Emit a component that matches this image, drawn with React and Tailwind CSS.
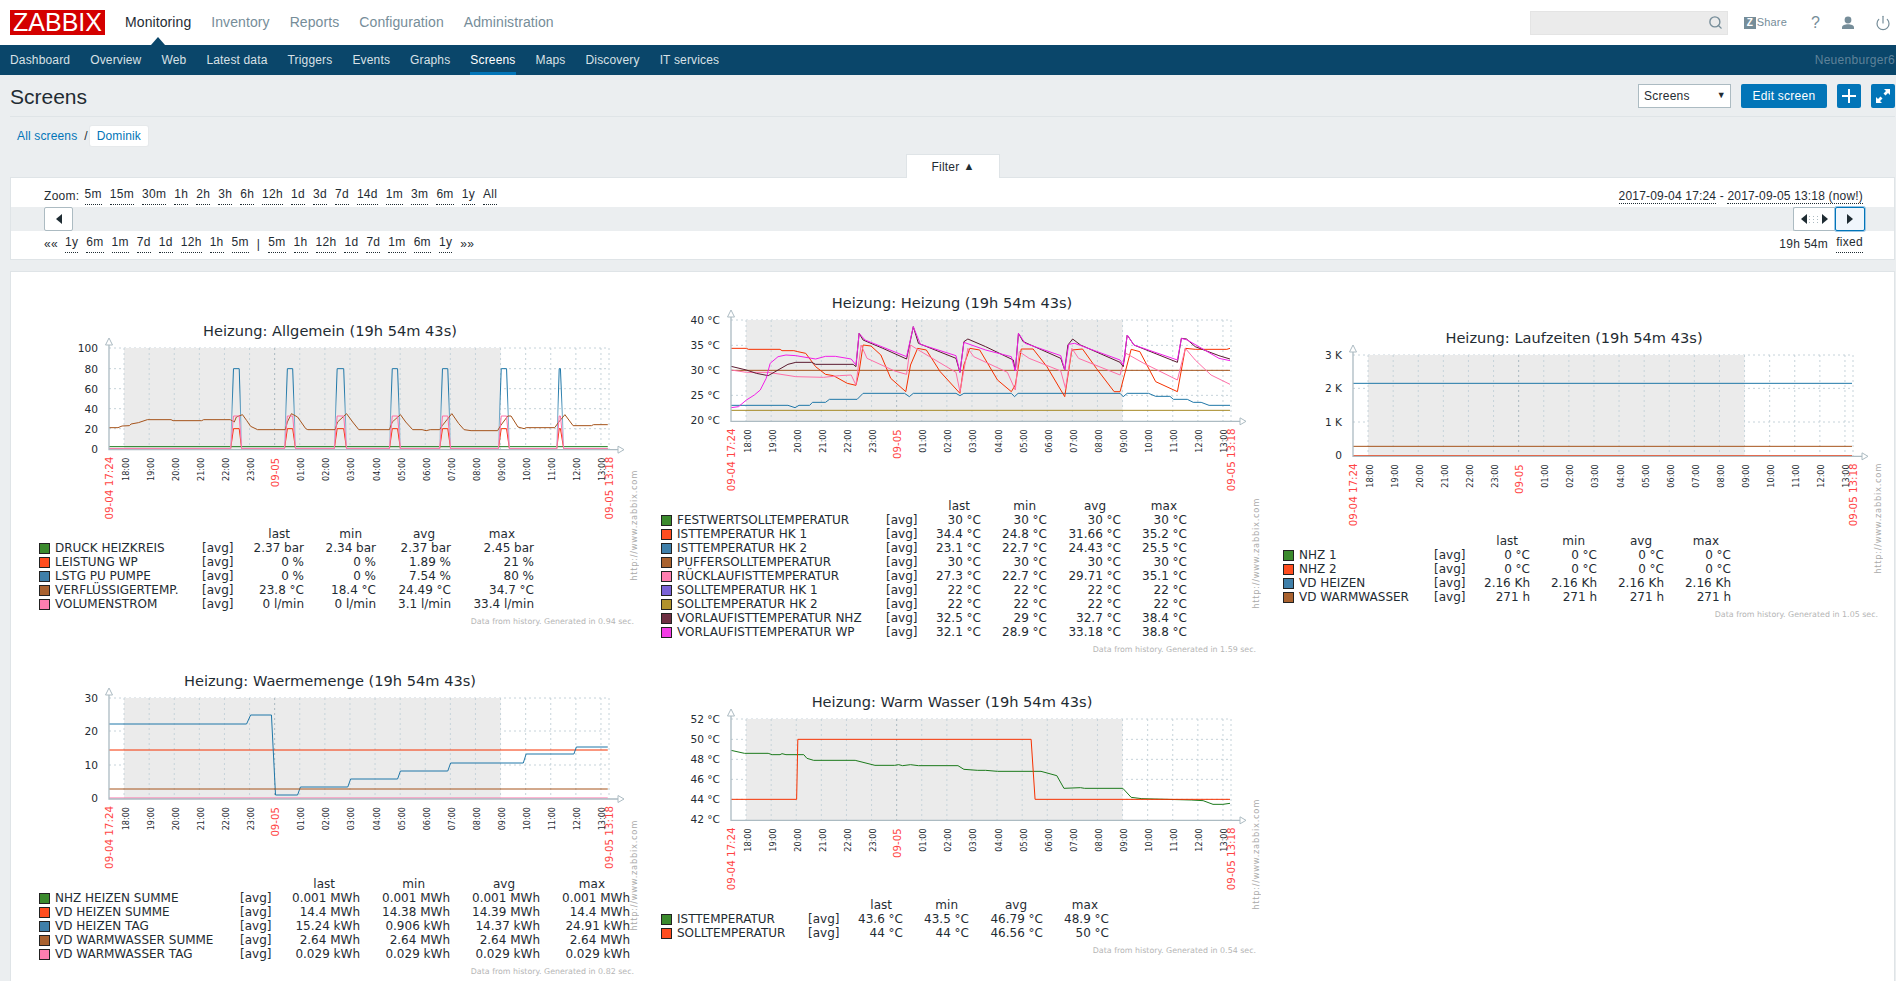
import { Search, Power } from 'lucide-react';

const GREEN = '#1c7a1c';
const RED = '#f63100';
const BLUE = '#1f77a8';
const BROWN = '#a5531b';
const PINK = '#ff6fa8';
const GOLD = '#a68a25';
const DARK = '#5a1a2f';
const MAGENTA = '#f21fe8';

const HOURS = ['18:00', '19:00', '20:00', '21:00', '22:00', '23:00', '09-05', '01:00', '02:00', '03:00', '04:00', '05:00', '06:00', '07:00', '08:00', '09:00', '10:00', '11:00', '12:00', '13:00'];

const pumpPulses = [[516, 523, 537, 543], [648, 655, 668, 675], [770, 777, 793, 800], [905, 912, 925, 932], [1028, 1035, 1048, 1055], [1172, 1179, 1192, 1199], [1315, 1321, 1324, 1332]];

function pulses(top, base) {
  const out = [[218, base]];
  pumpPulses.forEach(([a, b, c, d]) => out.push([a, base], [b, top], [c, top], [d, base]));
  out.push([1440, base]);
  return out;
}

const graphs = [
  {
    title: 'Heizung: Allgemein (19h 54m 43s)',
    sx: 2.45, zx0: 218, zy0: 143,
    ticks: [['100', 143], ['80', 205], ['60', 265], ['40', 325], ['20', 385], ['0', 445]],
    series: [
      { color: GREEN, points: [[218, 439], [1440, 439]] },
      { color: RED, points: pulses(385, 445) },
      { color: 'url(#pumpFade)', points: pulses(205, 445) },
      { color: BROWN, points: [[218, 382], [240, 382], [250, 377], [268, 376], [272, 371], [290, 367], [312, 358], [370, 358], [375, 361], [445, 361], [450, 358], [515, 358], [525, 365], [530, 350], [545, 343], [555, 360], [565, 378], [582, 388], [650, 388], [655, 365], [665, 340], [680, 350], [700, 385], [705, 388], [772, 388], [778, 365], [800, 340], [815, 365], [830, 388], [905, 388], [912, 365], [932, 343], [945, 365], [962, 388], [985, 388], [995, 391], [1005, 388], [1028, 388], [1035, 375], [1058, 340], [1075, 370], [1088, 388], [1105, 391], [1170, 391], [1178, 375], [1195, 347], [1203, 347], [1220, 380], [1235, 385], [1240, 382], [1310, 382], [1320, 365], [1335, 343], [1355, 376], [1400, 376], [1405, 373], [1440, 373]] },
      { color: PINK, points: pulses(347, 445) },
    ],
    cols: 'grid-cols-[172px_50px_52px_72px_75px_83px]',
    head: ['pr-[14px]', 'pr-[14px]', 'pr-[16px]', 'pr-[19px]'],
    legend: [
      ['DRUCK HEIZKREIS', 'bg-[#3b8a2d]', '2.37 bar', '2.34 bar', '2.37 bar', '2.45 bar'],
      ['LEISTUNG WP', 'bg-[#ff4d1f]', '0 %', '0 %', '1.89 %', '21 %'],
      ['LSTG PU PUMPE', 'bg-[#3f7fa9]', '0 %', '0 %', '7.54 %', '80 %'],
      ['VERFLÜSSIGERTEMP.', 'bg-[#a9622f]', '23.8 °C', '18.4 °C', '24.49 °C', '34.7 °C'],
      ['VOLUMENSTROM', 'bg-[#ff7fb0]', '0 l/min', '0 l/min', '3.1 l/min', '33.4 l/min'],
    ],
    footer: 'Data from history. Generated in 0.94 sec.',
  },
  {
    title: 'Heizung: Heizung (19h 54m 43s)',
    sx: 2.529, zx0: 206, zy0: 105,
    ticks: [['40 °C', 105], ['35 °C', 181], ['30 °C', 256], ['25 °C', 331], ['20 °C', 406]],
    series: [
      { color: BROWN, points: [[206, 256], [1468, 256]] },
      { color: GOLD, points: [[206, 376], [1468, 376]] },
      { color: BLUE, points: [[206, 361], [350, 361], [368, 368], [378, 361], [405, 361], [412, 352], [445, 352], [455, 343], [525, 343], [540, 325], [645, 325], [657, 335], [667, 325], [775, 325], [785, 332], [795, 325], [915, 325], [923, 335], [932, 325], [1190, 325], [1198, 335], [1208, 325], [1262, 325], [1280, 334], [1316, 334], [1325, 343], [1360, 343], [1375, 352], [1395, 352], [1415, 361], [1468, 361]] },
      { color: RED, points: [[206, 190], [245, 190], [250, 193], [330, 193], [335, 197], [365, 197], [375, 200], [395, 205], [420, 245], [445, 268], [465, 272], [500, 295], [522, 301], [530, 260], [540, 180], [560, 183], [585, 210], [610, 280], [648, 320], [660, 240], [678, 190], [700, 195], [735, 260], [785, 325], [795, 240], [810, 190], [835, 195], [880, 285], [915, 320], [925, 300], [940, 192], [970, 192], [1005, 245], [1050, 335], [1068, 195], [1095, 192], [1130, 250], [1175, 320], [1190, 320], [1218, 193], [1240, 200], [1280, 290], [1335, 320], [1355, 190], [1380, 193], [1460, 193], [1468, 190]] },
      { color: PINK, points: [[206, 255], [245, 262], [300, 262], [370, 275], [440, 277], [480, 272], [510, 270], [522, 300], [535, 180], [550, 220], [620, 258], [650, 268], [660, 180], [680, 195], [775, 262], [785, 320], [805, 190], [820, 215], [905, 262], [925, 315], [935, 200], [960, 220], [1040, 258], [1052, 310], [1068, 190], [1085, 220], [1190, 270], [1205, 205], [1250, 235], [1335, 285], [1355, 190], [1380, 225], [1420, 270], [1468, 298]] },
      { color: DARK, points: [[206, 244], [245, 255], [270, 265], [300, 272], [325, 255], [350, 238], [370, 232], [410, 232], [420, 238], [515, 238], [522, 245], [530, 145], [540, 165], [590, 190], [650, 222], [667, 125], [680, 175], [775, 220], [785, 262], [795, 170], [805, 162], [850, 185], [920, 225], [925, 258], [933, 145], [945, 170], [1040, 220], [1050, 255], [1058, 180], [1070, 162], [1090, 180], [1190, 232], [1198, 245], [1208, 150], [1225, 180], [1335, 232], [1345, 160], [1358, 162], [1380, 185], [1440, 212], [1468, 222]] },
      { color: MAGENTA, points: [[206, 368], [225, 365], [245, 345], [265, 330], [280, 315], [295, 280], [305, 235], [325, 215], [345, 210], [370, 212], [420, 222], [445, 214], [470, 214], [510, 222], [522, 240], [530, 145], [545, 165], [650, 215], [667, 125], [685, 178], [775, 212], [785, 262], [795, 172], [850, 195], [915, 215], [925, 258], [933, 145], [950, 175], [1040, 212], [1050, 255], [1060, 178], [1075, 175], [1190, 225], [1198, 240], [1208, 150], [1225, 180], [1335, 225], [1345, 160], [1360, 165], [1440, 220], [1468, 227]] },
    ],
    cols: 'grid-cols-[234px_50px_45px_66px_74px_66px]',
    head: ['pr-[11px]', 'pr-[11px]', 'pr-[15px]', 'pr-[10px]'],
    legend: [
      ['FESTWERTSOLLTEMPERATUR', 'bg-[#3b8a2d]', '30 °C', '30 °C', '30 °C', '30 °C'],
      ['ISTTEMPERATUR HK 1', 'bg-[#ff4d1f]', '34.4 °C', '24.8 °C', '31.66 °C', '35.2 °C'],
      ['ISTTEMPERATUR HK 2', 'bg-[#3f7fa9]', '23.1 °C', '22.7 °C', '24.43 °C', '25.5 °C'],
      ['PUFFERSOLLTEMPERATUR', 'bg-[#a9622f]', '30 °C', '30 °C', '30 °C', '30 °C'],
      ['RÜCKLAUFISTTEMPERATUR', 'bg-[#ff7fb0]', '27.3 °C', '22.7 °C', '29.71 °C', '35.1 °C'],
      ['SOLLTEMPERATUR HK 1', 'bg-[#7a62d6]', '22 °C', '22 °C', '22 °C', '22 °C'],
      ['SOLLTEMPERATUR HK 2', 'bg-[#b0922c]', '22 °C', '22 °C', '22 °C', '22 °C'],
      ['VORLAUFISTTEMPERATUR NHZ', 'bg-[#6e2f42]', '32.5 °C', '29 °C', '32.7 °C', '38.4 °C'],
      ['VORLAUFISTTEMPERATUR WP', 'bg-[#f33de6]', '32.1 °C', '28.9 °C', '33.18 °C', '38.8 °C'],
    ],
    footer: 'Data from history. Generated in 1.59 sec.',
  },
  {
    title: 'Heizung: Laufzeiten (19h 54m 43s)',
    sx: 2.505, zx0: 208, zy0: 105,
    ticks: [['3 K', 105], ['2 K', 205], ['1 K', 306], ['0', 406]],
    series: [
      { color: BLUE, points: [[208, 190], [1458, 190]] },
      { color: BROWN, points: [[208, 379], [1458, 379]] },
      { color: RED, points: [[208, 407], [1458, 407]] },
    ],
    cols: 'grid-cols-[160px_50px_46px_67px_67px_67px]',
    head: ['pr-[12px]', 'pr-[12px]', 'pr-[12px]', 'pr-[12px]'],
    legend: [
      ['NHZ 1', 'bg-[#3b8a2d]', '0 °C', '0 °C', '0 °C', '0 °C'],
      ['NHZ 2', 'bg-[#ff4d1f]', '0 °C', '0 °C', '0 °C', '0 °C'],
      ['VD HEIZEN', 'bg-[#3f7fa9]', '2.16 Kh', '2.16 Kh', '2.16 Kh', '2.16 Kh'],
      ['VD WARMWASSER', 'bg-[#a9622f]', '271 h', '271 h', '271 h', '271 h'],
    ],
    footer: 'Data from history. Generated in 1.05 sec.',
  },
  {
    title: 'Heizung: Waermemenge (19h 54m 43s)',
    sx: 2.45, zx0: 218, zy0: 115,
    ticks: [['30', 115], ['20', 214], ['10', 316], ['0', 415]],
    series: [
      { color: RED, points: [[218, 271], [1440, 271]] },
      { color: BLUE, points: [[218, 193], [555, 193], [565, 166], [616, 166], [626, 406], [680, 406], [687, 382], [803, 382], [810, 358], [925, 358], [932, 334], [1048, 334], [1055, 310], [1233, 310], [1240, 283], [1357, 283], [1363, 262], [1440, 262]] },
      { color: BROWN, points: [[218, 388], [1440, 388]] },
      { color: PINK, points: [[218, 415], [1440, 415]] },
    ],
    cols: 'grid-cols-[210px_50px_70px_90px_90px_90px]',
    head: ['pr-[25px]', 'pr-[25px]', 'pr-[25px]', 'pr-[25px]'],
    legend: [
      ['NHZ HEIZEN SUMME', 'bg-[#3b8a2d]', '0.001 MWh', '0.001 MWh', '0.001 MWh', '0.001 MWh'],
      ['VD HEIZEN SUMME', 'bg-[#ff4d1f]', '14.4 MWh', '14.38 MWh', '14.39 MWh', '14.4 MWh'],
      ['VD HEIZEN TAG', 'bg-[#3f7fa9]', '15.24 kWh', '0.906 kWh', '14.37 kWh', '24.91 kWh'],
      ['VD WARMWASSER SUMME', 'bg-[#a9622f]', '2.64 MWh', '2.64 MWh', '2.64 MWh', '2.64 MWh'],
      ['VD WARMWASSER TAG', 'bg-[#ff7fb0]', '0.029 kWh', '0.029 kWh', '0.029 kWh', '0.029 kWh'],
    ],
    footer: 'Data from history. Generated in 0.82 sec.',
  },
  {
    title: 'Heizung: Warm Wasser (19h 54m 43s)',
    sx: 2.529, zx0: 206, zy0: 117,
    ticks: [['52 °C', 117], ['50 °C', 178], ['48 °C', 238], ['46 °C', 298], ['44 °C', 358], ['42 °C', 418]],
    series: [
      { color: GREEN, points: [[206, 211], [240, 220], [300, 220], [310, 224], [330, 224], [335, 221], [345, 224], [390, 224], [398, 235], [415, 241], [520, 241], [570, 256], [620, 256], [630, 254], [640, 257], [660, 254], [680, 257], [780, 257], [795, 268], [830, 271], [850, 271], [880, 274], [990, 274], [1030, 287], [1048, 325], [1090, 323], [1100, 325], [1197, 325], [1218, 352], [1245, 356], [1370, 360], [1400, 362], [1425, 373], [1450, 373], [1468, 370]] },
      { color: RED, points: [[206, 358], [372, 358], [375, 178], [965, 178], [975, 358], [1468, 358]] },
    ],
    cols: 'grid-cols-[156px_50px_45px_66px_74px_66px]',
    head: ['pr-[11px]', 'pr-[11px]', 'pr-[16px]', 'pr-[11px]'],
    legend: [
      ['ISTTEMPERATUR', 'bg-[#3b8a2d]', '43.6 °C', '43.5 °C', '46.79 °C', '48.9 °C'],
      ['SOLLTEMPERATUR', 'bg-[#ff4d1f]', '44 °C', '44 °C', '46.56 °C', '50 °C'],
    ],
    footer: 'Data from history. Generated in 0.54 sec.',
  },
];

function Plot({ graph }) {
  const { sx, zx0, zy0, ticks, series } = graph;
  const px = zx => (zx - zx0) / sx + 79;
  const py = zy => (zy - zy0) / 3 + 10;
  const bottom = py(ticks[ticks.length - 1][1]) + 1;
  const hourX = i => 79 + 15.06 + 25.1 * i;
  const left = 79;
  const right = 579;

  return (
    <svg width="620" height="189" className="block font-['DejaVu_Sans',sans-serif]">
      <defs>
        <linearGradient id="pumpFade" gradientUnits="userSpaceOnUse" x1="0" x2="0" y1="50" y2="110">
          <stop offset="0" stopColor="#1f77a8" />
          <stop offset="1" stopColor="#c4dae7" />
        </linearGradient>
      </defs>
      {ticks.slice(0, -1).map(([label, zy]) => (
        <line key={label} x1={left} x2={right} y1={py(zy)} y2={py(zy)} stroke="#c6d3da" strokeDasharray="2 3" />
      ))}
      <rect x={hourX(0)} y="10" width={hourX(15) - hourX(0)} height={bottom - 10} fill="#ebebeb" />
      {HOURS.map((h, i) => (
        <line key={h} x1={hourX(i)} x2={hourX(i)} y1="10" y2={bottom} stroke={h === '09-05' ? '#a9b8c0' : '#c6d3da'} strokeDasharray="2 3" />
      ))}
      <line x1={right} x2={right} y1="10" y2={bottom} stroke="#c6d3da" strokeDasharray="2 3" />
      {series.map((s, i) => (
        <polyline key={i} points={s.points.map(([x, y]) => `${px(x)},${py(y)}`).join(' ')} fill="none" stroke={s.color} strokeWidth="1" />
      ))}
      <path d={`M${left} 2V${bottom}H${right + 10}`} fill="none" stroke="#acbbc2" strokeWidth="1.3" />
      <path d={`M${left - 3.5} 7L${left} 0L${left + 3.5} 7Z`} fill="#fff" stroke="#acbbc2" />
      <path d={`M${right + 9} ${bottom - 3.5}L${right + 15} ${bottom}L${right + 9} ${bottom + 3.5}Z`} fill="#fff" stroke="#acbbc2" />
      {ticks.map(([label, zy]) => (
        <text key={label} x={left - 11} y={py(zy) + 4} textAnchor="end" fontSize="10.6" fill="#1f2c33">{label}</text>
      ))}
      {HOURS.map((h, i) => (
        h === '09-05'
          ? <text key={h} transform={`rotate(-90 ${hourX(i) + 4} ${bottom + 8})`} x={hourX(i) + 4} y={bottom + 8} textAnchor="end" fontSize="10.2" fill="#f44">{h}</text>
          : <text key={h} transform={`rotate(-90 ${hourX(i) + 4.5} ${bottom + 8})`} x={hourX(i) + 4.5} y={bottom + 8} textAnchor="end" fontSize="8.1" fill="#1f2c33">{h}</text>
      ))}
      <text transform={`rotate(-90 ${left + 4} ${bottom + 7})`} x={left + 4} y={bottom + 7} textAnchor="end" fontSize="10.3" fill="#f44">09-04 17:24</text>
      <text transform={`rotate(-90 ${right + 4} ${bottom + 7})`} x={right + 4} y={bottom + 7} textAnchor="end" fontSize="10.3" fill="#f44">09-05 13:18</text>
    </svg>
  );
}

function Graph({ graph }) {
  const names = ['last', 'min', 'avg', 'max'];
  return (
    <div className="relative w-[620px] pb-[3px] font-['DejaVu_Sans',sans-serif] tracking-normal text-[#1f2c33]">
      <div className="h-[27px] pt-[12px] pr-[20px] text-center text-[14.6px] leading-[16px] whitespace-nowrap">{graph.title}</div>
      <Plot graph={graph} />
      <div className={`grid ${graph.cols} text-[12px] leading-[14px] whitespace-nowrap`}>
        <div className="col-span-2 h-[14px]" />
        {names.map((n, i) => <div key={n} className={`h-[14px] text-right ${graph.head[i]}`}>{n}</div>)}
        {graph.legend.map(([name, swatch, ...values]) => (
          <div key={name} className="contents">
            <div className="flex h-[14px] items-center gap-[5px] pl-[9px]">
              <span className={`h-[11px] w-[11px] border border-[#222] ${swatch}`} />
              <span>{name}</span>
            </div>
            <div className="h-[14px]">[avg]</div>
            {values.map((v, i) => <div key={i} className="h-[14px] text-right">{v}</div>)}
          </div>
        ))}
      </div>
      <div className="mt-[4px] pr-[16px] text-right text-[7.9px] leading-[14px] text-[#b5b5b5] whitespace-nowrap">{graph.footer}</div>
      <span className="absolute bottom-[51px] left-[599px] rotate-180 text-[8.4px] leading-[10px] tracking-[0.7px] text-[#aaa] [writing-mode:vertical-rl]">http://www.zabbix.com</span>
    </div>
  );
}

function Dotted({ children }) {
  return <span className="border-b border-dotted border-[#1f2c33] leading-[14px]">{children}</span>;
}

function App() {
  const mainMenu = ['Monitoring', 'Inventory', 'Reports', 'Configuration', 'Administration'];
  const subMenu = ['Dashboard', 'Overview', 'Web', 'Latest data', 'Triggers', 'Events', 'Graphs', 'Screens', 'Maps', 'Discovery', 'IT services'];
  const zooms = ['5m', '15m', '30m', '1h', '2h', '3h', '6h', '12h', '1d', '3d', '7d', '14d', '1m', '3m', '6m', '1y', 'All'];
  const back = ['1y', '6m', '1m', '7d', '1d', '12h', '1h', '5m'];
  const forward = ['5m', '1h', '12h', '1d', '7d', '1m', '6m', '1y'];

  return (
    <div className="flex h-[981px] w-full flex-col overflow-hidden bg-[#ebeef0] font-['Liberation_Sans',Arial,sans-serif] text-[12px] text-[#1f2c33]">
      <header className="flex h-[45px] shrink-0 items-center bg-white pl-[10px] pr-[1px]">
        <div className="flex h-[25px] w-[95px] items-center justify-center bg-[#d40000] text-[25px] leading-none text-white">ZABBIX</div>
        <nav className="ml-[10px] flex text-[14px] tracking-[0.09px]">
          {mainMenu.map((m, i) => (
            <a key={m} className={`relative px-[10px] leading-[45px] ${i === 0 ? 'text-[#1f2c33]' : 'text-[#768d99]'}`}>
              {m}
              {i === 0 && <span className="absolute bottom-0 left-1/2 -ml-[7px] h-0 w-0 border-x-[7px] border-b-[8px] border-x-transparent border-b-[#0a466a]" />}
            </a>
          ))}
        </nav>
        <div className="ml-auto flex items-center">
          <div className="flex h-[24px] w-[198px] items-center justify-end border border-[#e4e4e4] bg-[#ebebeb] pr-[4px] text-[#768d99]">
            <Search size={15} strokeWidth={2.2} />
          </div>
          <div className="ml-[16px] flex w-[43px] items-center gap-[1px] text-[#768d99]">
            <span className="flex h-[12px] w-[12px] items-center justify-center bg-[#768d99] text-[10px] font-bold text-white">Z</span>
            <span className="text-[11px] tracking-[0.2px]">Share</span>
          </div>
          <div className="ml-[23px] w-[11px] text-center text-[16px] text-[#768d99]">?</div>
          <div className="ml-[20px] text-[#768d99]">
            <svg width="14" height="14" viewBox="0 0 14 14" fill="currentColor"><circle cx="7" cy="4" r="3.4" /><path d="M1 13v-1.5C1 9.5 4 8.3 7 8.3s6 1.2 6 3.2V13Z" /></svg>
          </div>
          <div className="ml-[20px] mr-[4px] text-[#768d99]"><Power size={16} strokeWidth={1.8} /></div>
        </div>
      </header>

      <nav className="flex h-[30px] shrink-0 items-stretch bg-[#0a466a] pr-[1px] tracking-[0.16px] text-[#d9e1e6]">
        {subMenu.map(m => (
          <a key={m} className={`mx-[10px] leading-[30px] ${m === 'Screens' ? 'border-b-[3px] border-[#0275b8] text-white' : ''}`}>{m}</a>
        ))}
        <span className="ml-auto leading-[30px] tracking-[0.3px] text-[#5f8299]">Neuenburger6</span>
      </nav>

      <div className="ml-[10px] mr-[1px] flex h-[42px] shrink-0 items-center justify-between border-b border-[#dfe4e7]">
        <h1 className="pt-[2px] text-[21px] font-normal">Screens</h1>
        <div className="flex items-center tracking-[0.25px]">
          <div className="flex h-[24px] w-[93px] items-center justify-between border border-[#acbbc2] bg-white pl-[5px] pr-[4px]">
            <span>Screens</span>
            <span className="text-[9px]">▼</span>
          </div>
          <button className="ml-[10px] h-[24px] w-[86px] rounded-[2px] bg-[#0275b8] text-white">Edit screen</button>
          <button className="ml-[10px] flex h-[24px] w-[24px] items-center justify-center rounded-[2px] bg-[#0275b8]">
            <svg width="14" height="14" viewBox="0 0 14 14" fill="#fff"><path d="M6 0h2v6h6v2H8v6H6V8H0V6h6Z" /></svg>
          </button>
          <button className="ml-[10px] flex h-[24px] w-[24px] items-center justify-center rounded-[2px] bg-[#0275b8]">
            <svg width="14" height="14" viewBox="0 0 14 14" fill="#fff"><path d="M8 0h6v6l-2-2-2.5 2.5-2-2L10 2ZM0 8l2 2 2.5-2.5 2 2L4 12l2 2H0Z" /></svg>
          </button>
        </div>
      </div>

      <div className="flex h-[37px] shrink-0 items-center pb-[1px] pl-[17px] pt-[2px] tracking-[0.15px]">
        <a className="text-[#0275b8]">All screens</a>
        <span className="ml-[7px] mr-[2px]">/</span>
        <a className="flex h-[20px] w-[58px] items-center justify-center rounded-[2px] bg-white text-[#0275b8] shadow-[0_0_0_1px_#e6e9eb]">Dominik</a>
      </div>

      <div className="z-10 -mb-[1px] ml-[906px] flex h-[24px] w-[94px] shrink-0 items-center justify-center gap-[4px] border border-b-0 border-[#dfe4e7] bg-white tracking-[0.2px]">
        Filter <span className="text-[11px]">▲</span>
      </div>

      <section className="ml-[10px] mr-[1px] flex h-[83px] shrink-0 flex-col border border-[#dfe4e7] bg-white tracking-[0.3px]">
        <div className="flex h-[29px] items-start justify-between pl-[33px] pr-[31px] pt-[9px]">
          <div className="flex gap-[8px]">
            <span className="-mr-[3px]">Zoom:</span>
            {zooms.map(z => <Dotted key={z}>{z}</Dotted>)}
          </div>
          <div className="tracking-[0.18px]"><Dotted>2017-09-04 17:24</Dotted> - <Dotted>2017-09-05 13:18 (now!)</Dotted></div>
        </div>
        <div className="flex h-[24px] items-stretch justify-between bg-[#ebeef0] pl-[33px] pr-[29px]">
          <button className="flex w-[29px] items-center justify-center rounded-[2px] border border-[#acbbc2] bg-white">
            <svg width="6" height="10" viewBox="0 0 6 10" fill="#1f2c33"><path d="M6 0v10L0 5Z" /></svg>
          </button>
          <div className="flex">
            <div className="flex w-[42px] items-center justify-center gap-[2px] rounded-l-[2px] border border-r-0 border-[#acbbc2] bg-white">
              <svg width="6" height="10" viewBox="0 0 6 10" fill="#1f2c33"><path d="M6 0v10L0 5Z" /></svg>
              <svg width="11" height="7" viewBox="0 0 11 7" fill="#acbbc2">
                <path d="M0 0h1v1H0ZM4 0h1v1H4ZM8 0h1v1H8ZM0 3h1v1H0ZM4 3h1v1H4ZM8 3h1v1H8ZM0 6h1v1H0ZM4 6h1v1H4ZM8 6h1v1H8Z" />
              </svg>
              <svg width="6" height="10" viewBox="0 0 6 10" fill="#1f2c33"><path d="M0 0v10l6-5Z" /></svg>
            </div>
            <button className="flex w-[30px] items-center justify-center rounded-[2px] border border-[#0275b8] bg-[#f0f6fc] shadow-[0_0_0_1px_#9cc7e6]">
              <svg width="6" height="10" viewBox="0 0 6 10" fill="#1f2c33"><path d="M0 0v10l6-5Z" /></svg>
            </button>
          </div>
        </div>
        <div className="flex flex-1 items-start justify-between pl-[33px] pr-[31px] pt-[4px]">
          <div className="flex gap-[8px]">
            <span className="-mr-px">««</span>
            {back.map((b, i) => <Dotted key={i}>{b}</Dotted>)}
            <span>|</span>
            {forward.map((b, i) => <Dotted key={i}>{b}</Dotted>)}
            <span>»»</span>
          </div>
          <div className="flex gap-[8px]">
            <span>19h 54m</span>
            <Dotted>fixed</Dotted>
          </div>
        </div>
      </section>

      <main className="ml-[10px] mr-[1px] mt-[11px] flex-1 border border-[#dfe4e7] bg-white pl-[19px] pt-[11px]">
        <div className="grid grid-cols-[622px_622px_622px] items-center gap-y-[1px]">
          {graphs.map(g => <Graph key={g.title} graph={g} />)}
        </div>
      </main>
    </div>
  );
}

export default App;
